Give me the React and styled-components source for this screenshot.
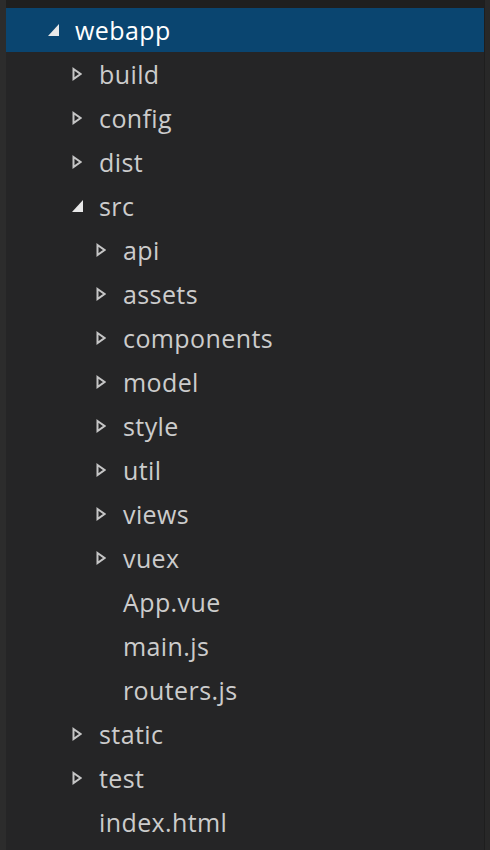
import React from 'react';
import styled, { createGlobalStyle } from 'styled-components';

const tree = [
    { name: 'webapp', level: 0, type: 'open', selected: true },
    { name: 'build', level: 1, type: 'closed' },
    { name: 'config', level: 1, type: 'closed' },
    { name: 'dist', level: 1, type: 'closed' },
    { name: 'src', level: 1, type: 'open' },
    { name: 'api', level: 2, type: 'closed' },
    { name: 'assets', level: 2, type: 'closed' },
    { name: 'components', level: 2, type: 'closed' },
    { name: 'model', level: 2, type: 'closed' },
    { name: 'style', level: 2, type: 'closed' },
    { name: 'util', level: 2, type: 'closed' },
    { name: 'views', level: 2, type: 'closed' },
    { name: 'vuex', level: 2, type: 'closed' },
    { name: 'App.vue', level: 2, type: 'file' },
    { name: 'main.js', level: 2, type: 'file' },
    { name: 'routers.js', level: 2, type: 'file' },
    { name: 'static', level: 1, type: 'closed' },
    { name: 'test', level: 1, type: 'closed' },
    { name: 'index.html', level: 1, type: 'file' },
];

const Twistie = ({ type }) => {
    if (type === 'open') {
        return (
            <svg width="12" height="14" viewBox="0 0 12 14">
                <polygon points="11,1 11,13 0,13" fill="currentColor" />
            </svg>
        );
    }
    if (type === 'closed') {
        return (
            <svg width="10" height="14" viewBox="0 0 10 14">
                <polygon points="1.5,2 8.5,7 1.5,12" fill="none" stroke="currentColor" strokeWidth="2" />
            </svg>
        );
    }
    return null;
};

const App = () => {
    return (
        <>
            <GlobalStyle />
            <PanelStyle>
                <EdgeStyle />
                <ExplorerStyle>
                    <TopStripStyle />
                    <ListStyle>
                        {tree.map((item) => (
                            <RowStyle key={item.name} $level={item.level} $selected={item.selected}>
                                <TwistieStyle $open={item.type === 'open'}>
                                    <Twistie type={item.type} />
                                </TwistieStyle>
                                <span>{item.name}</span>
                            </RowStyle>
                        ))}
                    </ListStyle>
                </ExplorerStyle>
                <ScrollEdgeStyle />
            </PanelStyle>
        </>
    );
};

//Styled Components
const GlobalStyle = createGlobalStyle`
    html, body {
        margin: 0;
        padding: 0;
        background: #252526;
    }
`;

const PanelStyle = styled.div`
    display: flex;
    width: 490px;
    height: 850px;
    overflow: hidden;
    background: #252526;
`;

const EdgeStyle = styled.div`
    width: 6px;
    flex-shrink: 0;
    background: #2c2c2c;
`;

const ScrollEdgeStyle = styled.div`
    width: 5px;
    flex-shrink: 0;
    border-left: 1px solid #1e1e1e;
    background: #282828;
`;

const ExplorerStyle = styled.div`
    flex: 1;
    display: flex;
    flex-direction: column;
`;

const TopStripStyle = styled.div`
    height: 8px;
    background: #1f1f1f;
`;

const ListStyle = styled.div`
    flex: 1;
    display: flex;
    flex-direction: column;
`;

const RowStyle = styled.div`
    display: flex;
    align-items: center;
    height: 44px;
    padding-left: ${(p) => 42 + p.$level * 24}px;
    background: ${(p) => (p.$selected ? '#0a4570' : 'transparent')};
    color: ${(p) => (p.$selected ? '#ffffff' : '#cccccc')};
    font-family: 'Open Sans', 'Liberation Sans', sans-serif;
    font-size: 25px;
    font-weight: 500;
    letter-spacing: 0.4px;
    line-height: 44px;
    white-space: nowrap;
`;

const TwistieStyle = styled.div`
    width: 27px;
    height: 44px;
    display: flex;
    align-items: center;
    color: ${(p) => (p.$open ? '#e8e8e8' : '#c5c5c5')};
    svg {
        display: block;
    }
`;

export default App;
